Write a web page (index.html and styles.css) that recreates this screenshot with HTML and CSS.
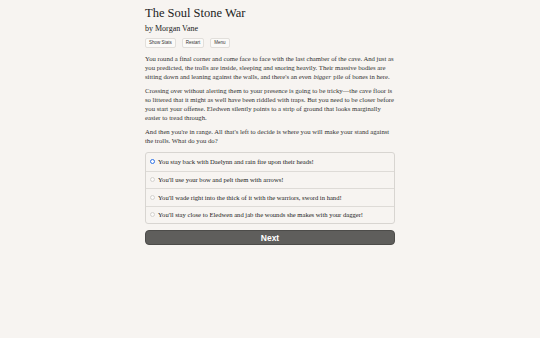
FILE: index.html
```html
<!DOCTYPE html>
<html lang="en">
    <head>
        <meta charset="UTF-8" />
        <meta name="viewport" content="width=device-width, initial-scale=1.0" />
        <title>The Soul Stone War</title>
        <link rel="stylesheet" href="styles.css">
    </head>
    <body>
        <div id="main">
            <h1 class="title">The Soul Stone War</h1>
            <h2 class="author">by Morgan Vane</h2>
            <div class="buttons">
                <button class="spacedLink">Show Stats</button>
                <button class="spacedLink">Restart</button>
                <button class="spacedLink">Menu</button>
            </div>
            <div id="text">
                <p>You round a final corner and come face to face with the last chamber of the cave. And just as you predicted, the trolls are inside, sleeping and snoring heavily. Their massive bodies are sitting down and leaning against the walls, and there's an even <i>bigger</i> pile of bones in here.</p>
                <p>Crossing over without alerting them to your presence is going to be tricky—the cave floor is so littered that it might as well have been riddled with traps. But you need to be closer before you start your offense. Eledwen silently points to a strip of ground that looks marginally easier to tread through.</p>
                <p>And then you're in range. All that's left to decide is where you will make your stand against the trolls. What do you do?</p>
            </div>
            <form class="choice">
                <label class="option"><input type="radio" name="choice" checked> You stay back with Daelynn and rain fire upon their heads!</label>
                <label class="option"><input type="radio" name="choice"> You'll use your bow and pelt them with arrows!</label>
                <label class="option"><input type="radio" name="choice"> You'll wade right into the thick of it with the warriors, sword in hand!</label>
                <label class="option"><input type="radio" name="choice"> You'll stay close to Eledwen and jab the wounds she makes with your dagger!</label>
            </form>
            <button class="next">Next</button>
        </div>
    </body>
</html>
```

FILE: styles.css
```css
* {
    margin: 0;
    padding: 0;
    box-sizing: border-box;
}
body {
    background-color: #f7f4f1;
    color: #2b2b2b;
    font-family: "Liberation Serif", serif;
}
#main {
    width: 250px;
    margin: 0 auto;
    padding-top: 6px;
}
.title {
    font-size: 12.5px;
    font-weight: normal;
    line-height: 15px;
    color: #222;
}
.author {
    font-size: 8px;
    font-weight: normal;
    line-height: 10px;
    margin-top: 3px;
    color: #222;
}
.buttons {
    display: flex;
    gap: 6px;
    margin-top: 4px;
}
.spacedLink {
    font-family: "Liberation Sans", sans-serif;
    font-size: 4.5px;
    line-height: 6px;
    padding: 1px 3px;
    background: #fbfaf8;
    border: 1px solid #e2dfdb;
    border-radius: 2px;
    color: #333;
}
#text {
    margin-top: 6px;
    font-size: 6.7px;
    line-height: 9px;
    color: #333;
}
#text p {
    margin-bottom: 5px;
}
#text i {
    padding: 0 0.6px;
}
.choice {
    margin-top: 7px;
    border: 1px solid #d8d5d1;
    border-radius: 3px;
}
.option {
    display: flex;
    align-items: center;
    height: 17.5px;
    padding-left: 4px;
    font-size: 6.6px;
    color: #222;
    border-top: 1px solid #dedbd7;
}
.option:first-child {
    border-top: none;
}
.option input {
    appearance: none;
    width: 5px;
    height: 5px;
    border-radius: 50%;
    border: 0.6px solid #d4d2cf;
    background: #fbfaf9;
    margin-right: 3px;
}
.option input:checked {
    background: #fff;
    border: 1.6px solid #2f72e6;
}
.next {
    display: block;
    width: 100%;
    height: 15px;
    margin-top: 6px;
    background: #5f5e5c;
    color: #fff;
    border: 1px solid #4d4c4a;
    border-radius: 4px;
    font-family: "Liberation Sans", sans-serif;
    font-weight: bold;
    font-size: 8.5px;
}
```
